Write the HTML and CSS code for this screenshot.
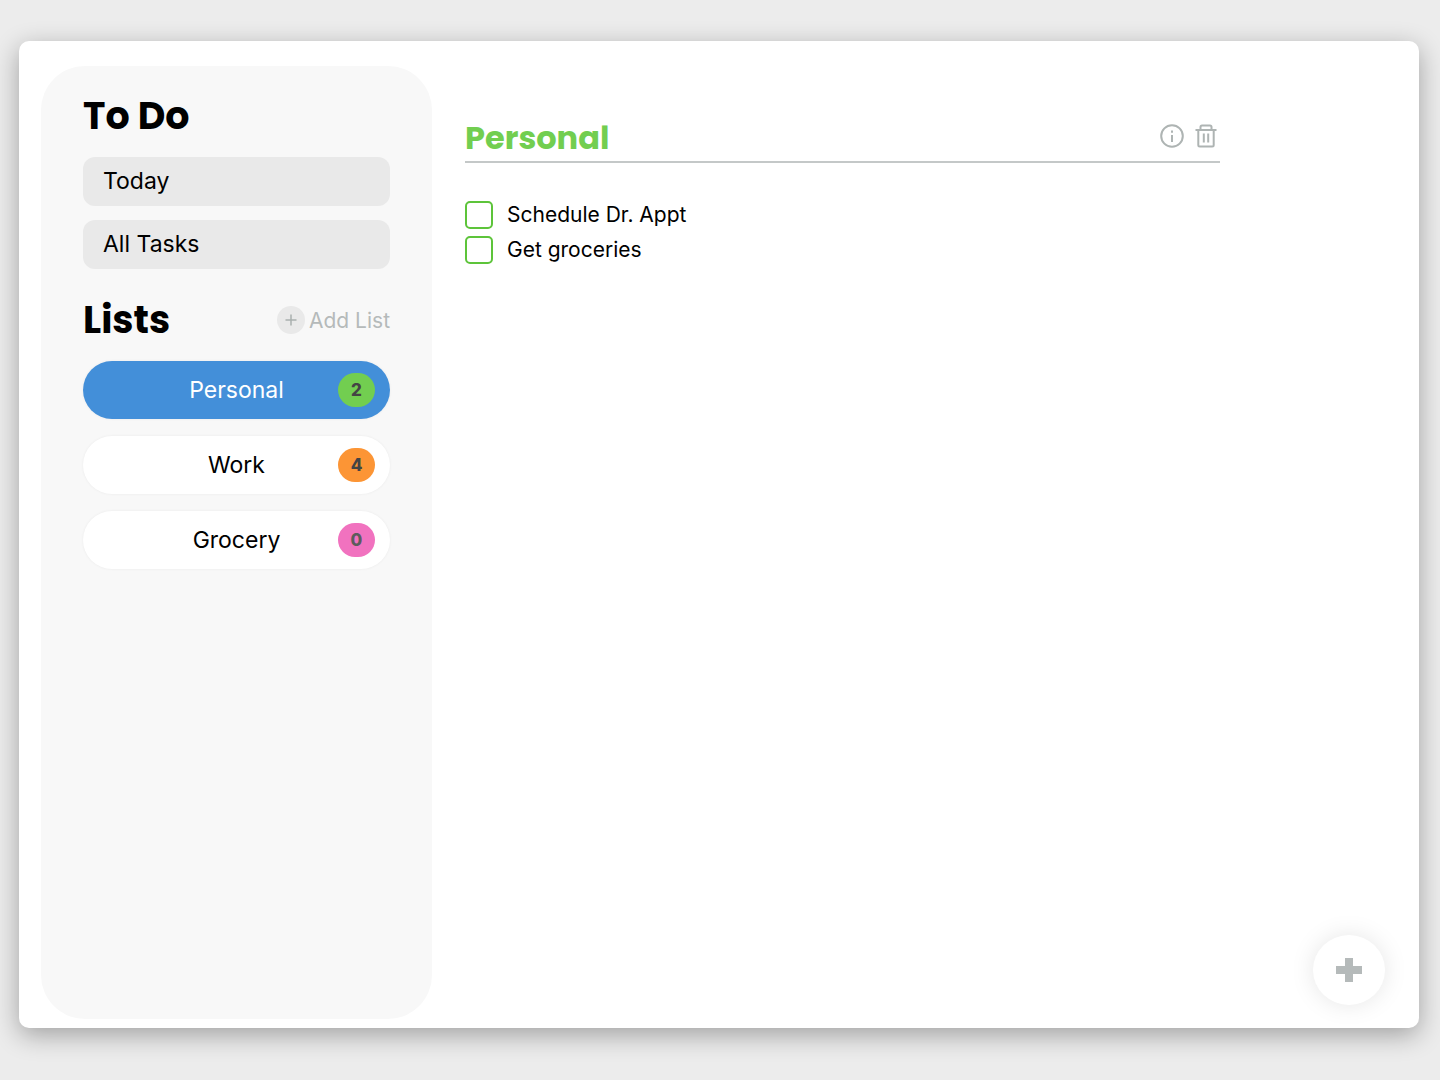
FILE: index.html
```html
<!DOCTYPE html>
<html lang="en">
<head>
<meta charset="utf-8">
<meta name="viewport" content="width=device-width, initial-scale=1">
<title>To Do</title>
<link rel="stylesheet" href="styles.css">
</head>
<body>
<div class="window">
  <aside class="sidebar">
    <h1 class="heading">To Do</h1>
    <nav class="views">
      <a class="view" href="#today">Today</a>
      <a class="view" href="#all">All Tasks</a>
    </nav>
    <div class="lists-head">
      <h2 class="heading">Lists</h2>
      <button class="add-list" type="button">
        <svg class="add-icon" viewBox="0 0 28 28" aria-hidden="true"><circle cx="14" cy="14" r="14" fill="#e9e9e9"/><path d="M14 8.500v11M8.500 14h11" stroke="#a9b0ae" stroke-width="1.5"/></svg>
        Add List
      </button>
    </div>
    <nav class="lists">
      <a class="list active" href="#personal"><span>Personal</span><span class="count green">2</span></a>
      <a class="list" href="#work"><span>Work</span><span class="count orange">4</span></a>
      <a class="list" href="#grocery"><span>Grocery</span><span class="count pink">0</span></a>
    </nav>
  </aside>
  <main class="main">
    <header class="main-head">
      <h2 class="title">Personal</h2>
      <div class="tools">
        <button class="tool" type="button" aria-label="List details">
          <svg viewBox="0 0 24 24" fill="none" stroke="#aeb4b3" stroke-width="2"><circle cx="12" cy="12" r="10.8"/><path d="M12 11v7M12 6.5v2.2"/></svg>
        </button>
        <button class="tool" type="button" aria-label="Delete list">
          <svg viewBox="0 0 24 24" fill="none" stroke="#aeb4b3" stroke-width="2"><path d="M1.500 6h21M6.500 6V3q0-1.500 1.500-1.500h8q1.500 0 1.500 1.500v3M4.300 6v15q0 1.500 1.500 1.500h12.400q1.500 0 1.500-1.500V6M9.800 9.500v9M14.200 9.500v9"/></svg>
        </button>
      </div>
    </header>
    <ul class="tasks">
      <li><label class="task"><input class="check" type="checkbox">Schedule Dr. Appt</label></li>
      <li><label class="task"><input class="check" type="checkbox">Get groceries</label></li>
    </ul>
  </main>
  <button class="fab" type="button" aria-label="Add task">
    <svg viewBox="0 0 26 26" aria-hidden="true"><path d="M9 1h8v8h9v8h-9v8H9v-8H0V9h9z" fill="#b5baba"/></svg>
  </button>
</div>
</body>
</html>
```
FILE: styles.css
```css
* {
  box-sizing: border-box;
}

body {
  margin: 0;
  min-height: 100vh;
  padding: 41px 21px 52px 19px;
  display: flex;
  background: #ececec;
  color: #000;
  font-family: Inter, "Liberation Sans", sans-serif;
}

a {
  color: inherit;
  text-decoration: none;
}

button {
  font: inherit;
  border: 0;
  padding: 0;
  cursor: pointer;
}

.window {
  position: relative;
  flex: 1;
  display: flex;
  padding: 25px 0 9px 22px;
  background: #fff;
  border-radius: 10px;
  box-shadow: 0 7px 26px rgba(0, 0, 0, 0.32);
}

.sidebar {
  flex: 0 0 391px;
  padding: 26px 42px;
  background: #f8f8f8;
  border-radius: 44px;
}

.heading {
  margin: 0;
  font-family: Poppins, Inter, sans-serif;
  font-size: 38px;
  font-weight: 700;
  line-height: 48px;
}

.views {
  display: grid;
  gap: 14px;
  margin: 17px 0 27px;
}

.view {
  padding: 0 20px;
  font-size: 23px;
  line-height: 49px;
  background: #e9e9e9;
  border-radius: 12px;
}

.lists-head {
  display: flex;
  align-items: center;
  justify-content: space-between;
}

.add-list {
  display: flex;
  align-items: center;
  gap: 4px;
  background: none;
  color: #b5baba;
  font-size: 21px;
}

.add-icon {
  width: 28px;
  height: 28px;
}

.lists {
  display: grid;
  gap: 17px;
  margin-top: 17px;
}

.list {
  position: relative;
  text-align: center;
  font-size: 23px;
  line-height: 58px;
  background: #fff;
  border-radius: 30px;
  box-shadow: 0 0 3px rgba(0, 0, 0, 0.06);
}

.list.active {
  background: #438fd9;
  color: #fff;
}

.count {
  position: absolute;
  top: 12px;
  right: 15px;
  width: 37px;
  border-radius: 17px;
  color: #444;
  font-size: 17px;
  font-weight: 800;
  line-height: 34px;
}

.green {
  background: #72ce50;
}

.orange {
  background: #fc9535;
}

.pink {
  background: #f172bf;
  color: #5c5c5c;
}

.main {
  flex: 1;
  padding: 49px 199px 0 33px;
}

.main-head {
  display: flex;
  align-items: center;
  justify-content: space-between;
  border-bottom: 2px solid #c4c8c8;
}

.title {
  margin: 0;
  color: #72ce50;
  font-family: Poppins, Inter, sans-serif;
  font-size: 32px;
  font-weight: 700;
  line-height: 46px;
}

.tools {
  display: flex;
  gap: 10px;
  padding: 0 2px 4px 0;
}

.tool {
  width: 24px;
  height: 24px;
  background: none;
}

.tool svg {
  display: block;
}

.tasks {
  display: grid;
  gap: 7px;
  margin: 38px 0 0;
  padding: 0;
  list-style: none;
}

.task {
  display: flex;
  align-items: center;
  gap: 14px;
  font-size: 21px;
  line-height: 28px;
}

.check {
  appearance: none;
  width: 28px;
  height: 28px;
  margin: 0;
  border: 2px solid #5dc43a;
  border-radius: 5px;
}

.check:checked {
  background: #5dc43a;
}

.fab {
  position: absolute;
  right: 34px;
  bottom: 23px;
  width: 72px;
  height: 70px;
  display: grid;
  place-items: center;
  background: #fff;
  border-radius: 50%;
  box-shadow: 0 0 24px rgba(0, 0, 0, 0.1);
}

.fab svg {
  width: 26px;
  height: 26px;
}
```
